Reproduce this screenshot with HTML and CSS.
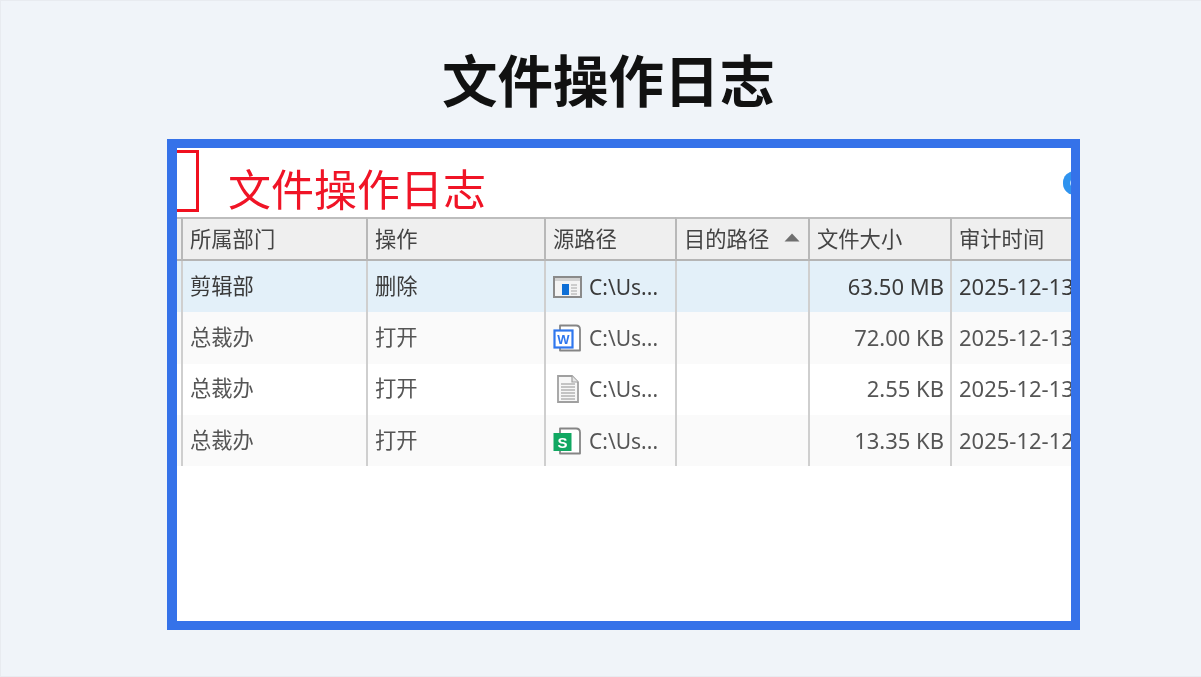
FILE: index.html
```html
<!DOCTYPE html>
<html lang="zh-CN">
<head>
<meta charset="utf-8">
<title>文件操作日志</title>
<link rel="stylesheet" href="styles.css">
</head>
<body>
<main class="slide">
  <h1 class="slide-title">文件操作日志</h1>
  <section class="frame">
    <div class="shot">
      <header class="shot-head">
        <div class="red-box"></div>
        <div class="red-title">文件操作日志</div>
        <div class="help-dot"></div>
      </header>
      <table class="log">
        <colgroup>
          <col class="c0"><col class="c1"><col class="c2"><col class="c3"><col class="c4"><col class="c5"><col class="c6">
        </colgroup>
        <thead>
          <tr>
            <th></th><th>所属部门</th><th>操作</th><th>源路径</th>
            <th><span class="sort-head">目的路径<svg class="sort" width="16" height="9" viewBox="0 0 16 9"><path d="M8 0.5 L15.5 8.5 H0.5 Z" fill="#6f6f6f"/></svg></span></th>
            <th>文件大小</th><th>审计时间</th>
          </tr>
        </thead>
        <tbody>
          <tr class="selected">
            <td></td><td class="cjk">剪辑部</td><td class="cjk">删除</td>
            <td><span class="path">
              <svg class="ficon" width="30" height="24" viewBox="0 0 30 24"><rect x="1" y="2" width="27" height="20" fill="#f4f4f4" stroke="#8a8a8a" stroke-width="2"/><rect x="2" y="3" width="25" height="3" fill="#d2d2d2"/><rect x="9" y="9" width="7" height="11" fill="#0f6fd6"/><path d="M18 10h6M18 13h6M18 16h6M18 19h6" stroke="#a5a5a5" stroke-width="1.2"/></svg>
              <span>C:\Us...</span></span></td>
            <td></td><td class="num">63.50 MB</td><td class="date">2025-12-13</td>
          </tr>
          <tr class="odd">
            <td></td><td class="cjk">总裁办</td><td class="cjk">打开</td>
            <td><span class="path">
              <svg class="ficon" width="30" height="30" viewBox="0 0 30 30"><path d="M7 2.5H23Q27 2.5 27 6.5V27.5H7Z" fill="#fff" stroke="#858585" stroke-width="1.8" stroke-linejoin="round"/><rect x="1.5" y="7.5" width="18" height="17" fill="#fff" stroke="#2f77ee" stroke-width="2.2"/><text class="badge-w" x="10.5" y="20.5" text-anchor="middle">W</text></svg>
              <span>C:\Us...</span></span></td>
            <td></td><td class="num">72.00 KB</td><td class="date">2025-12-13</td>
          </tr>
          <tr>
            <td></td><td class="cjk">总裁办</td><td class="cjk">打开</td>
            <td><span class="path">
              <svg class="ficon" width="30" height="30" viewBox="0 0 30 30"><path d="M5 2H19L25 8V28H5Z" fill="#f7f7f7" stroke="#a0a0a0" stroke-width="1.8"/><path d="M19 2V8H25" fill="#e6e6e6" stroke="#a0a0a0" stroke-width="1.2"/><path d="M8 10h14M8 13h14M8 16h14M8 19h14M8 22h14M8 25h14" stroke="#b4b4b4" stroke-width="1.3"/></svg>
              <span>C:\Us...</span></span></td>
            <td></td><td class="num">2.55 KB</td><td class="date">2025-12-13</td>
          </tr>
          <tr class="odd">
            <td></td><td class="cjk">总裁办</td><td class="cjk">打开</td>
            <td><span class="path">
              <svg class="ficon" width="30" height="30" viewBox="0 0 30 30"><path d="M7 2.5H23Q27 2.5 27 6.5V27.5H7Z" fill="#fff" stroke="#858585" stroke-width="1.8" stroke-linejoin="round"/><rect x="0.5" y="7" width="18" height="18" fill="#11a862"/><text class="badge-s" x="9.5" y="21.5" text-anchor="middle">S</text></svg>
              <span>C:\Us...</span></span></td>
            <td></td><td class="num">13.35 KB</td><td class="date">2025-12-12</td>
          </tr>
        </tbody>
      </table>
    </div>
  </section>
</main>
</body>
</html>
```

FILE: styles.css
```css
* { box-sizing: border-box; }
html, body { margin: 0; padding: 0; }
body { width: 1201px; height: 677px; overflow: hidden; }

.slide {
  width: 1201px;
  height: 677px;
  padding-top: 45px;
  background: #f0f4f9;
  border: 1px solid #e8ebf0;
  border-width: 1px 0 1px 1px;
  font-family: "Noto Sans CJK SC", "Noto Sans", sans-serif;
  display: flex;
  flex-direction: column;
}

.slide-title {
  margin: 0 0 0 15px;
  height: 64px;
  font-size: 55.5px;
  line-height: 64px;
  font-weight: 700;
  color: #111;
  text-align: center;
}

.frame {
  margin: 29px 0 0 166px;
  width: 913px;
  height: 491px;
  background: #3572e9;
  padding: 9px 9px 9px 10px;
}

.shot {
  width: 100%;
  height: 100%;
  background: #fff;
  overflow: hidden;
  filter: blur(0.3px);
}

.shot-head {
  height: 69px;
  display: flex;
  align-items: flex-start;
  position: relative;
}

.red-box {
  width: 22px;
  height: 62px;
  margin-top: 2px;
  border: 3.5px solid #f0101f;
  border-left: 0;
}

.red-title {
  margin: 11px 0 0 29px;
  font-size: 43px;
  line-height: 57px;
  font-weight: 400;
  color: #f01426;
}

.help-dot {
  width: 24px;
  height: 24px;
  margin: 23px -16px 0 auto;
  border-radius: 50%;
  background: #2f93ef;
  box-shadow: inset 0 0 0 7px #2f93ef, inset 0 0 0 12px #bfe0fb;
}

.log {
  width: 973px;
  table-layout: fixed;
  border-collapse: separate;
  border-spacing: 0;
  font-size: 21.3px;
  color: #444;
  font-family: "Noto Sans", "Noto Sans CJK SC", sans-serif;
}

.c0 { width: 4px; }
.c1 { width: 185px; }
.c2 { width: 178px; }
.c3 { width: 131px; }
.c4 { width: 133px; }
.c5 { width: 142px; }
.c6 { width: 200px; }

.log th {
  height: 44px;
  padding: 0 0 4px 7px;
  background: #efefef;
  border-top: 2px solid #bdbdbd;
  border-bottom: 2px solid #b5b5b5;
  border-left: 2px solid #b8b8b8;
  font-family: "Noto Sans CJK SC", sans-serif;
  font-weight: 400;
  text-align: left;
  white-space: nowrap;
  overflow: hidden;
}
.log th:first-child, .log td:first-child { border-left: 0; padding: 0; }

.log td {
  height: 51.33px;
  padding: 0 0 0 7px;
  border-left: 2px solid #cfcfcf;
  color: #555;
  white-space: nowrap;
  overflow: hidden;
}

.log .selected td { background: #e3f0f9; color: #3a3a3a; }
.log .odd td { background: #fafafa; }

.log .cjk { font-family: "Noto Sans CJK SC", sans-serif; padding-bottom: 5px; }
.log .num { text-align: right; padding: 0 6px 2px 0; font-size: 22px; }
.log .date { font-size: 22px; padding-bottom: 2px; }

.sort-head { display: inline-flex; align-items: center; gap: 15px; }

.path { display: flex; align-items: center; gap: 6px; font-size: 21px; }
.ficon { flex: none; }
.badge-w { font: 700 13px "Liberation Sans", sans-serif; fill: #2f77ee; }
.badge-s { font: 700 15px "Liberation Sans", sans-serif; fill: #fff; }
```
